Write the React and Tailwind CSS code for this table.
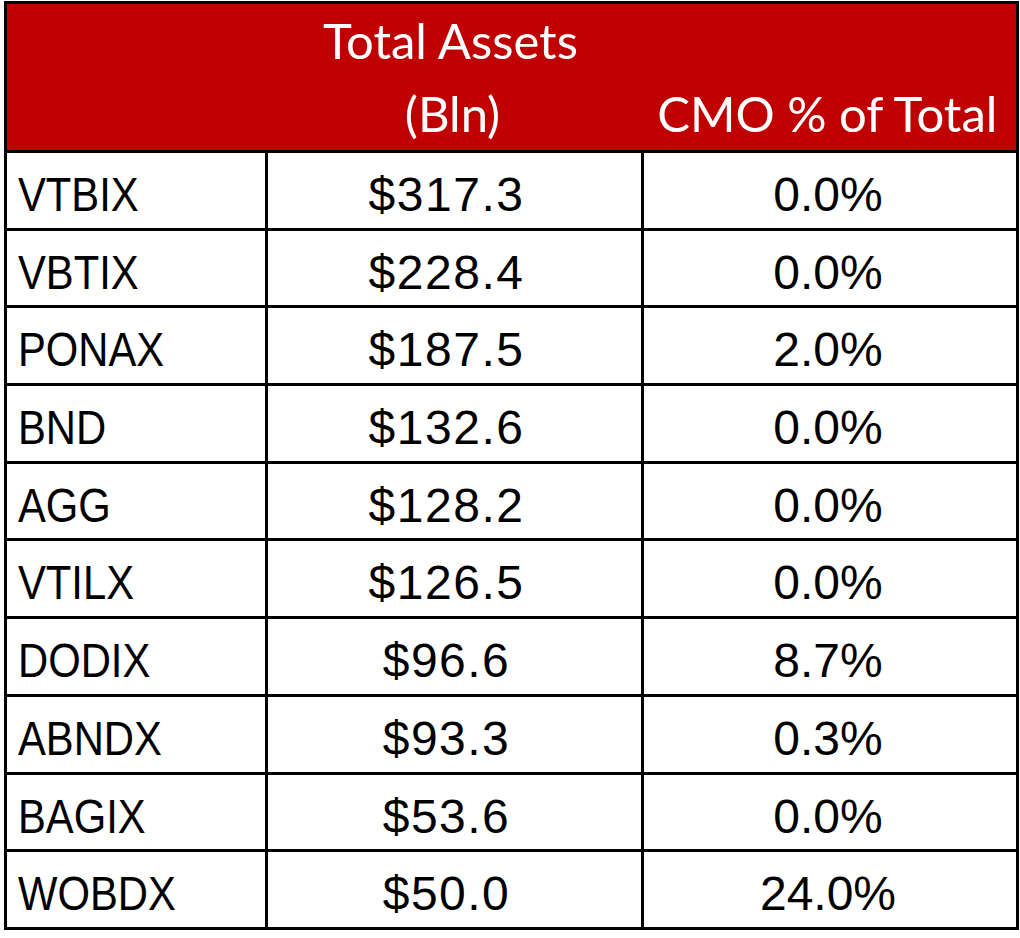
const rows = [
  ['VTBIX', '$317.3', '0.0%'],
  ['VBTIX', '$228.4', '0.0%'],
  ['PONAX', '$187.5', '2.0%'],
  ['BND', '$132.6', '0.0%'],
  ['AGG', '$128.2', '0.0%'],
  ['VTILX', '$126.5', '0.0%'],
  ['DODIX', '$96.6', '8.7%'],
  ['ABNDX', '$93.3', '0.3%'],
  ['BAGIX', '$53.6', '0.0%'],
  ['WOBDX', '$50.0', '24.0%'],
];

export default function App() {
  return (
    <div className="bg-white w-[1020px] h-[938px] pt-[1px] pl-[4px]">
      <table className="table-fixed border-collapse w-[1012px] border-[3px] border-black text-black">
        <colgroup>
          <col className="w-[261px]" />
          <col className="w-[376px]" />
          <col className="w-[375px]" />
        </colgroup>
        <thead>
          <tr className="bg-[#c00000] text-white h-[140px] border-b-[3px] border-black text-[49px] font-['Lato',sans-serif]">
            <th className="p-0" />
            <th className="p-0 align-bottom font-normal leading-[73px]">
              <div className="pr-[8px]">Total Assets</div>
              <div className="pr-[4px]">(Bln)</div>
            </th>
            <th className="p-0 align-bottom font-normal leading-[73px]">
              <div className="pr-[4px]">CMO % of Total</div>
            </th>
          </tr>
        </thead>
        <tbody className="font-['Liberation_Sans',Arial,sans-serif] text-[48px]">
          {rows.map(([name, assets, cmo]) => (
            <tr key={name} className="h-[77.7px]">
              <td className="border-[3px] border-black pl-[11px] pt-[18px] align-top leading-none">
                <span className="inline-block origin-left scale-x-[0.87]">{name}</span>
              </td>
              <td className="border-[3px] border-black text-center pr-[16px] pt-[18px] align-top leading-none tracking-[1.5px]">{assets}</td>
              <td className="border-[3px] border-black text-center pr-[4px] pt-[18px] align-top leading-none">{cmo}</td>
            </tr>
          ))}
        </tbody>
      </table>
    </div>
  );
}
